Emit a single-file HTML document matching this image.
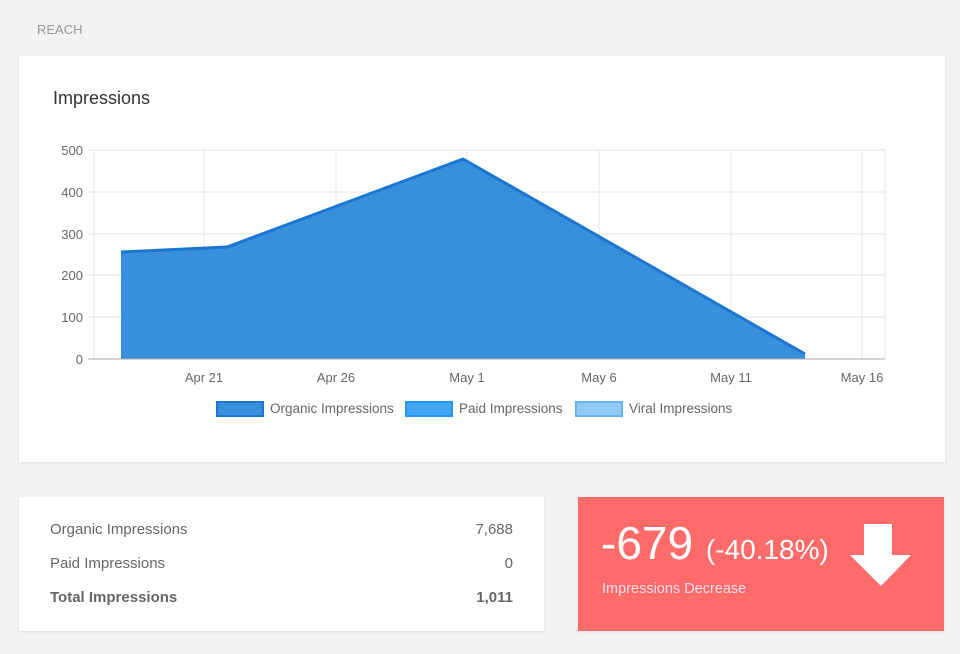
<!DOCTYPE html>
<html><head><meta charset="utf-8"><style>
body{margin:0;width:960px;height:654px;background:#f2f2f2;font-family:"Liberation Sans",sans-serif;position:relative;overflow:hidden}
.card{position:absolute;background:#fff;box-shadow:0 1px 2px rgba(0,0,0,.08)}
.t{position:absolute;color:#555}
</style></head><body>
<div class="t" style="left:37px;top:22px;font-size:13px;color:#999">REACH</div>
<div class="card" style="left:19px;top:56px;width:926px;height:406px"></div>
<div class="t" style="left:53px;top:88px;font-size:18px;color:#333">Impressions</div>
<svg style="position:absolute;left:0;top:0" width="960" height="654">
<g stroke="#e6e6e6" stroke-width="1">
<line x1="88" y1="150" x2="885" y2="150"/><line x1="88" y1="192" x2="885" y2="192"/><line x1="88" y1="234" x2="885" y2="234"/><line x1="88" y1="275" x2="885" y2="275"/><line x1="88" y1="317" x2="885" y2="317"/>
<line x1="94" y1="150" x2="94" y2="359"/><line x1="204" y1="150" x2="204" y2="359"/><line x1="336" y1="150" x2="336" y2="359"/><line x1="467" y1="150" x2="467" y2="359"/><line x1="599" y1="150" x2="599" y2="359"/><line x1="731" y1="150" x2="731" y2="359"/><line x1="862" y1="150" x2="862" y2="359"/><line x1="885" y1="150" x2="885" y2="359"/>
</g>
<path d="M121 252 L227 247 L463 159 L805 354 L805 359 L121 359Z" fill="#388fdb"/>
<path d="M121 252 L227 247 L463 159 L805 354" fill="none" stroke="#1976d2" stroke-width="3"/>
<line x1="88" y1="359" x2="885" y2="359" stroke="#aaa"/>
<g font-size="13" fill="#666" text-anchor="end" font-family="Liberation Sans">
<text x="83" y="155">500</text><text x="83" y="197">400</text><text x="83" y="239">300</text><text x="83" y="280">200</text><text x="83" y="322">100</text><text x="83" y="364">0</text></g>
<g font-size="13" fill="#666" text-anchor="middle" font-family="Liberation Sans">
<text x="204" y="382">Apr 21</text><text x="336" y="382">Apr 26</text><text x="467" y="382">May 1</text><text x="599" y="382">May 6</text><text x="731" y="382">May 11</text><text x="862" y="382">May 16</text></g>
<rect x="217" y="402" width="46" height="14" fill="#388fdb" stroke="#1976d2" stroke-width="2"/>
<rect x="406" y="402" width="46" height="14" fill="#42a5f5" stroke="#2196f3" stroke-width="2"/>
<rect x="576" y="402" width="46" height="14" fill="#90caf9" stroke="#64b5f6" stroke-width="2"/>
<g font-size="13.5" fill="#666" font-family="Liberation Sans"><text x="270" y="413">Organic Impressions</text><text x="459" y="413">Paid Impressions</text><text x="629" y="413">Viral Impressions</text></g>
</svg>
<div class="card" style="left:19px;top:497px;width:525px;height:134px"></div>
<div class="t" style="left:50px;top:521px;font-size:15px;color:#666">Organic Impressions</div>
<div class="t" style="left:450px;width:63px;text-align:right;top:521px;font-size:15px;color:#666">7,688</div>
<div class="t" style="left:50px;top:555px;font-size:15px;color:#666">Paid Impressions</div>
<div class="t" style="left:450px;width:63px;text-align:right;top:555px;font-size:15px;color:#666">0</div>
<div class="t" style="left:50px;top:589px;font-size:15px;color:#666;font-weight:bold">Total Impressions</div>
<div class="t" style="left:450px;width:63px;text-align:right;top:589px;font-size:15px;color:#666;font-weight:bold">1,011</div>
<div class="card" style="left:578px;top:497px;width:366px;height:134px;background:#ff6b69"></div>
<div class="t" style="left:601px;top:516px;font-size:46px;color:#fff;white-space:nowrap">-679 <span style="font-size:28px">(-40.18%)</span></div>
<div class="t" style="left:602px;top:581px;font-size:14.5px;color:#fde">Impressions Decrease</div>
<svg style="position:absolute;left:0;top:0" width="960" height="654"><path d="M864 524 H892 V555 H911 L881 586 L850 555 H864Z" fill="#fff"/></svg>
</body></html>
